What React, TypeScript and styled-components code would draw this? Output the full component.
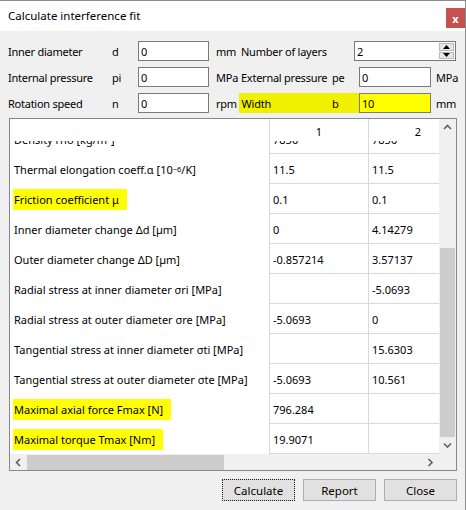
import React from 'react';
import styled, { createGlobalStyle } from 'styled-components';

const Global = createGlobalStyle`
  html, body { margin: 0; padding: 0; background: #fff; }
  body { font-family: "Segoe UI", "Noto Sans", sans-serif; font-size: 11px; color: #000; }
  #root { width: 466px; height: 510px; }
`;

const Window = styled.div`
  width: 466px;
  height: 510px;
  box-sizing: border-box;
  border-top: 1px solid #8c8c8c;
  border-right: 1px solid #8c8c8c;
  background: #f0f0f0;
  display: flex;
  flex-direction: column;
  overflow: hidden;
`;

const TitleBar = styled.div`
  height: 30px;
  flex: none;
  background: #fff;
  display: flex;
  justify-content: space-between;
  align-items: flex-start;
`;

const Title = styled.div`
  padding: 7px 0 0 8px;
  line-height: 16px;
  font-size: 11.5px;
`;

const CloseButton = styled.div`
  margin-top: 7px;
  width: 19px;
  height: 20px;
  background: #c75050;
  color: #fff;
  font-weight: bold;
  font-size: 11px;
  line-height: 1;
  display: flex;
  align-items: center;
  justify-content: center;
`;

const Form = styled.div`
  display: grid;
  grid-template-columns: 104px 26px 71px 32px 91px 27px 72px 25px;
  grid-auto-rows: 20px;
  row-gap: 6px;
  align-items: center;
  padding: 10px 0 0 8px;
  letter-spacing: -0.25px;
`;

const Label = styled.div<{ $hl?: boolean; $pad?: number }>`
  height: 20px;
  display: flex;
  align-items: center;
  white-space: nowrap;
  padding-left: ${(p) => p.$pad ?? 0}px;
  background: ${(p) => (p.$hl ? '#f0f000' : 'transparent')};
  margin-left: ${(p) => (p.$hl && !p.$pad ? '-2px' : '0')};
`;

const Input = styled.div<{ $hl?: boolean }>`
  height: 20px;
  box-sizing: border-box;
  border: 1px solid #7a7a7a;
  background: ${(p) => (p.$hl ? '#ffff00' : '#fff')};
  padding-left: 2px;
  display: flex;
  align-items: center;
`;

const SpinBox = styled.div`
  grid-column: 6 / span 3;
  justify-self: end;
  width: 102px;
  height: 20px;
  box-sizing: border-box;
  border: 1px solid #7a7a7a;
  background: #fff;
  display: flex;
  align-items: center;
  padding-left: 2px;
`;

const SpinValue = styled.div`
  flex: 1;
`;

const SpinButtons = styled.div`
  width: 15px;
  height: 16px;
  margin-right: 1px;
  display: flex;
  flex-direction: column;
  gap: 1px;
`;

const SpinButton = styled.div`
  flex: 1;
  background: #e6e6e6;
  border: 1px solid #b9b9b9;
  box-sizing: border-box;
  display: flex;
  align-items: center;
  justify-content: center;
`;

const Panel = styled.div`
  margin: 5px 0 0 9px;
  width: 448px;
  height: 353px;
  box-sizing: border-box;
  border: 1px solid #828790;
  background: #fff;
  display: grid;
  grid-template-columns: 429px 17px;
  grid-template-rows: 335px 16px;
`;

const DataArea = styled.div`
  display: flex;
  flex-direction: column;
  overflow: hidden;
`;

const HeaderRow = styled.div`
  flex: none;
  height: 22px;
  display: grid;
  grid-template-columns: 259px 99px 99px;
  background: #fff;
  position: relative;
  z-index: 1;
`;

const HeaderCell = styled.div<{ $first?: boolean }>`
  border-left: ${(p) => (p.$first ? 'none' : '1px solid #d9d9d9')};
  display: flex;
  justify-content: center;
  align-items: center;
  padding-top: 3px;
  box-sizing: border-box;
`;

const Viewport = styled.div`
  flex: 1;
  overflow: hidden;
`;

const Rows = styled.div`
  margin-top: -17px;
`;

const Row = styled.div`
  height: 30px;
  display: grid;
  grid-template-columns: 259px 99px 99px;
`;

const NameCell = styled.div`
  display: flex;
  align-items: center;
  padding-left: 4px;
  white-space: nowrap;
`;

const ValueCell = styled.div`
  border-left: 1px solid #d9d9d9;
  border-bottom: 1px solid #d9d9d9;
  display: flex;
  align-items: center;
  padding-left: 3px;
  padding-top: 1px;
  white-space: nowrap;
`;

const Marker = styled.span`
  background: #ffff00;
  padding: 3px 8px 3px 1px;
  margin-left: -1px;
`;

const Sup = styled.sup`
  font-size: 7.5px;
  vertical-align: 5px;
  line-height: 0;
`;

const VScroll = styled.div`
  background: #f0f0f0;
  display: flex;
  flex-direction: column;
`;

const HScroll = styled.div`
  background: #f0f0f0;
  display: flex;
`;

const Corner = styled.div`
  background: #f0f0f0;
`;

const Arrow = styled.div`
  flex: none;
  width: 17px;
  height: 17px;
  display: flex;
  align-items: center;
  justify-content: center;
`;

const HArrow = styled(Arrow)`
  height: 16px;
`;

const Track = styled.div`
  flex: 1;
`;

const VThumb = styled.div`
  flex: none;
  height: 189px;
  margin: 0 1px;
  background: #cdcdcd;
`;

const HThumb = styled.div`
  flex: none;
  width: 197px;
  margin: 1px 0 0;
  background: #cdcdcd;
`;

const ButtonBar = styled.div`
  display: flex;
  justify-content: flex-end;
  gap: 8px;
  padding: 8px 8px 0 0;
`;

const Button = styled.div<{ $focused?: boolean }>`
  width: 73px;
  height: 22px;
  box-sizing: border-box;
  background: #e1e1e1;
  border: 1px ${(p) => (p.$focused ? 'dotted #1a1a1a' : 'solid #adadad')};
  display: flex;
  align-items: center;
  justify-content: center;
  font-size: 11.5px;
`;

const Chevron = ({ dir }: { dir: 'up' | 'down' | 'left' | 'right' }) => {
  const pts: Record<string, string> = {
    up: '1,5 4.5,1.5 8,5',
    down: '1,1.5 4.5,5 8,1.5',
    left: '5,1 1.5,4.5 5,8',
    right: '1.5,1 5,4.5 1.5,8',
  };
  const vertical = dir === 'up' || dir === 'down';
  return (
    <svg width={vertical ? 9 : 7} height={vertical ? 7 : 9} viewBox={vertical ? '0 0 9 7' : '0 0 7 9'}>
      <polyline points={pts[dir]} fill="none" stroke="#606060" strokeWidth="1.6" />
    </svg>
  );
};

const Tri = ({ up }: { up?: boolean }) => (
  <svg width="7" height="4" viewBox="0 0 7 4">
    <polygon points={up ? '0,4 3.5,0 7,4' : '0,0 3.5,4 7,0'} fill="#000" />
  </svg>
);

type DataRow = { name: React.ReactNode; v1: string; v2: string };

const rows: DataRow[] = [
  { name: 'Density rho [kg/m³]', v1: '7850', v2: '7850' },
  { name: <>Thermal elongation coeff.α [10<Sup>−6</Sup>/K]</>, v1: '11.5', v2: '11.5' },
  { name: <Marker>Friction coefficient μ</Marker>, v1: '0.1', v2: '0.1' },
  { name: 'Inner diameter change Δd [µm]', v1: '0', v2: '4.14279' },
  { name: 'Outer diameter change ΔD [µm]', v1: '-0.857214', v2: '3.57137' },
  { name: 'Radial stress at inner diameter σri [MPa]', v1: '', v2: '-5.0693' },
  { name: 'Radial stress at outer diameter σre [MPa]', v1: '-5.0693', v2: '0' },
  { name: 'Tangential stress at inner diameter σti [MPa]', v1: '', v2: '15.6303' },
  { name: 'Tangential stress at outer diameter σte [MPa]', v1: '-5.0693', v2: '10.561' },
  { name: <Marker>Maximal axial force Fmax [N]</Marker>, v1: '796.284', v2: '' },
  { name: <Marker>Maximal torque Tmax [Nm]</Marker>, v1: '19.9071', v2: '' },
];

export default function App() {
  return (
    <>
      <Global />
      <Window>
        <TitleBar>
          <Title>Calculate interference fit</Title>
          <CloseButton>x</CloseButton>
        </TitleBar>
        <Form>
          <Label>Inner diameter</Label>
          <Label>d</Label>
          <Input>0</Input>
          <Label $pad={7}>mm</Label>
          <Label>Number of layers</Label>
          <SpinBox>
            <SpinValue>2</SpinValue>
            <SpinButtons>
              <SpinButton><Tri up /></SpinButton>
              <SpinButton><Tri /></SpinButton>
            </SpinButtons>
          </SpinBox>

          <Label>Internal pressure</Label>
          <Label>pi</Label>
          <Input>0</Input>
          <Label $pad={7}>MPa</Label>
          <Label>External pressure</Label>
          <Label>pe</Label>
          <Input>0</Input>
          <Label $pad={5}>MPa</Label>

          <Label>Rotation speed</Label>
          <Label>n</Label>
          <Input>0</Input>
          <Label $pad={7}>rpm</Label>
          <Label $hl>&nbsp;Width</Label>
          <Label $hl $pad={0.01}>b</Label>
          <Input $hl>10</Input>
          <Label $pad={5}>mm</Label>
        </Form>

        <Panel>
          <DataArea>
            <HeaderRow>
              <HeaderCell $first />
              <HeaderCell>1</HeaderCell>
              <HeaderCell>2</HeaderCell>
            </HeaderRow>
            <Viewport>
              <Rows>
                {rows.map((r, i) => (
                  <Row key={i}>
                    <NameCell>{r.name}</NameCell>
                    <ValueCell>{r.v1}</ValueCell>
                    <ValueCell>{r.v2}</ValueCell>
                  </Row>
                ))}
              </Rows>
            </Viewport>
          </DataArea>
          <VScroll>
            <Arrow><Chevron dir="up" /></Arrow>
            <Track />
            <VThumb />
            <Arrow><Chevron dir="down" /></Arrow>
          </VScroll>
          <HScroll>
            <HArrow><Chevron dir="left" /></HArrow>
            <HThumb />
            <Track />
            <HArrow><Chevron dir="right" /></HArrow>
          </HScroll>
          <Corner />
        </Panel>

        <ButtonBar>
          <Button $focused>Calculate</Button>
          <Button>Report</Button>
          <Button>Close</Button>
        </ButtonBar>
      </Window>
    </>
  );
}
